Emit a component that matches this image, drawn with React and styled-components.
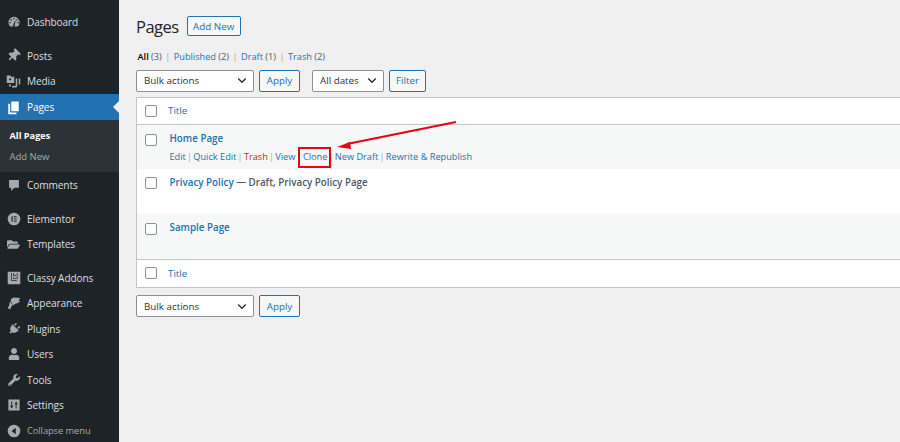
import React from "react";
import styled, { createGlobalStyle } from "styled-components";
import { FaThumbtack, FaFolderOpen, FaPlug, FaUser, FaWrench } from "react-icons/fa";

const GlobalStyle = createGlobalStyle`
  html, body {
    margin: 0;
    padding: 0;
    height: 100%;
    overflow: hidden;
    background: #f0f0f1;
    font-family: "Open Sans", "Noto Sans", sans-serif;
  }
`;

const Dashboard = () => (
  <svg viewBox="0 0 20 20" width="14" height="14" fill="currentColor">
    <path d="M10 2.500a8 8 0 0 0-8 8c0 2.400 1 4.500 2.700 6h10.600A8 8 0 0 0 18 10.500a8 8 0 0 0-8-8zM10 4.300a1.100 1.100 0 1 1 0 2.200 1.100 1.100 0 0 1 0-2.200zM5.800 6a1.100 1.100 0 1 1 0 2.200 1.100 1.100 0 0 1 0-2.200zM14.200 6a1.100 1.100 0 1 1 0 2.200 1.100 1.100 0 0 1 0-2.200zM4.200 10a1.100 1.100 0 1 1 0 2.200 1.100 1.100 0 0 1 0-2.200zM15.800 10a1.100 1.100 0 1 1 0 2.200 1.100 1.100 0 0 1 0-2.200zM8.800 14.500 11.500 8l.8.300-1.500 6.400a1.300 1.300 0 1 1-2-.2z" fillRule="evenodd" />
  </svg>
);

const Media = () => (
  <svg viewBox="0 0 20 20" width="15" height="15" fill="currentColor">
    <path fillRule="evenodd" d="M1 2h5l1 1.500h4V12H1zM5.500 5.500a1.500 1.500 0 1 0 0 3 1.500 1.500 0 0 0 0-3zM13 6h2v9.500a2.500 2.500 0 0 1-2.500 2.500H8v-2l5-.5zM17 6h2v8h-2zM4 14h2.500v2.500H4z" />
  </svg>
);

const PagesIcon = () => (
  <svg viewBox="0 0 20 20" width="15" height="15" fill="currentColor">
    <path d="M7 2h10v13H7z" />
    <path d="M3 5h2.500v11.500H14V19H3z" />
  </svg>
);

const CommentIcon = () => (
  <svg viewBox="0 0 20 20" width="14" height="14" fill="currentColor">
    <path d="M3 3h14v11h-6.500L6 18.500V14H3z" />
  </svg>
);

const Elementor = () => (
  <svg viewBox="0 0 20 20" width="14" height="14" fill="currentColor">
    <path fillRule="evenodd" d="M10 1a9 9 0 1 0 0 18 9 9 0 0 0 0-18zM6.500 6h1.600v8H6.500zM9.800 6h4v1.600h-4zM9.800 9.200h4v1.600h-4zM9.800 12.400h4V14h-4z" />
  </svg>
);

const Classy = () => (
  <svg viewBox="0 0 20 20" width="14" height="14" fill="currentColor">
    <path fillRule="evenodd" d="M1 1h18v18H1zM6 3v11h8v-1H7V3zM9 3v4h4v-1h-3V3zM9 9v2h6V3h-1v7h-4V9z" />
  </svg>
);

const Brush = () => (
  <svg viewBox="0 0 20 20" width="14" height="14" fill="currentColor">
    <path d="M5 5.500 9 2l10 1-2.500 3.500L19 7l-4 3.500-3 .5-3.500 2.500z" />
    <path d="M4.500 7 8 13.500l-2 1.500-1 4-4-1.500 2-3.500.5-3z" />
  </svg>
);

const Settings = () => (
  <svg viewBox="0 0 20 20" width="14" height="14" fill="currentColor">
    <path fillRule="evenodd" d="M2 2h16v16H2zM6 5v6H4.300L6.700 15 9 11H7.400V5zM13 5l-2.300 4h1.600v6h1.400V9h1.700z" />
  </svg>
);

const Collapse = () => (
  <svg viewBox="0 0 20 20" width="14" height="14" fill="currentColor">
    <path fillRule="evenodd" d="M10 1a9 9 0 1 1 0 18 9 9 0 0 1 0-18zM12.500 5.500 6.500 10l6 4.500z" />
  </svg>
);

const Chevron = () => (
  <svg viewBox="0 0 12 8" width="10" height="7" fill="none" stroke="#2c3338" strokeWidth="1.700">
    <path d="M1.500 1.500 6 6l4.500-4.500" />
  </svg>
);

const Page = styled.div`
  display: flex;
  width: 900px;
  height: 442px;
  overflow: hidden;
  background: #f0f0f1;
`;

const Sidebar = styled.nav`
  flex: none;
  width: 119px;
  height: 442px;
  padding-top: 9.500px;
  box-sizing: border-box;
  background: #1d2327;
`;

const MenuItem = styled.div`
  position: relative;
  display: flex;
  align-items: center;
  height: ${(p) => (p.$active ? 26 : 25.500)}px;
  margin-top: ${(p) => p.$gap || 0}px;
  background: ${(p) => (p.$active ? "#2271b1" : "transparent")};
  color: ${(p) => (p.$muted ? "#a7aaad" : p.$active ? "#fff" : "#dcdee0")};
  font-size: ${(p) => (p.$muted ? 9.400 : 10.100)}px;
  letter-spacing: -0.100px;
`;

const MenuIcon = styled.span`
  flex: none;
  display: flex;
  justify-content: center;
  align-items: center;
  width: 27px;
  color: ${(p) => (p.$active ? "#fff" : "#a7aaad")};
`;

const ActiveNotch = styled.span`
  position: absolute;
  right: 0;
  top: 50%;
  margin-top: -6px;
  border: 6px solid transparent;
  border-right-color: #f0f0f1;
  border-left: 0;
`;

const Submenu = styled.div`
  display: flex;
  flex-direction: column;
  height: 52px;
  padding: 5px 0 0 9.500px;
  box-sizing: border-box;
  background: #2c3338;
`;

const SubItem = styled.div`
  height: 21px;
  line-height: 21px;
  font-size: ${(p) => (p.$current ? 9.200 : 9.500)}px;
  font-weight: ${(p) => (p.$current ? 700 : 400)};
  color: ${(p) => (p.$current ? "#fff" : "#a4a8ab")};
`;

const Main = styled.main`
  position: relative;
  flex: 1;
  min-width: 0;
  padding: 16px 0 0 17px;
`;

const Heading = styled.div`
  display: flex;
  align-items: center;
  gap: 8px;
  height: 20px;
`;

const Title = styled.h1`
  margin: 0;
  font-size: 16.500px;
  font-weight: 400;
  letter-spacing: -0.500px;
  color: #1d2327;
`;

const OutlineButton = styled.button`
  display: inline-flex;
  align-items: center;
  justify-content: center;
  box-sizing: border-box;
  width: ${(p) => p.$w}px;
  height: ${(p) => p.$h || 22}px;
  padding: 0;
  margin-left: ${(p) => p.$gap || 0}px;
  border: 1px solid #2271b1;
  border-radius: 2px;
  background: #f6f7f7;
  color: #2271b1;
  font: 400 9.800px "Open Sans", sans-serif;
`;

const ViewLinks = styled.div`
  display: flex;
  align-items: center;
  height: 13px;
  margin-top: 14px;
  padding-left: 1.500px;
  font-size: 9.200px;
  color: #50575e;
  white-space: pre;
`;

const ViewCurrent = styled.span`
  color: #000;
  font-weight: 600;
`;

const Link = styled.span`
  color: ${(p) => (p.$danger ? "#b32d2e" : "#2271b1")};
`;

const Divider = styled.span`
  flex: none;
  width: ${(p) => p.$w}px;
  text-align: center;
  color: #a7aaad;
`;

const Toolbar = styled.div`
  display: flex;
  align-items: center;
  height: 22px;
  margin-top: ${(p) => p.$top}px;
`;

const SelectBox = styled.div`
  display: flex;
  align-items: center;
  justify-content: space-between;
  box-sizing: border-box;
  width: ${(p) => p.$w}px;
  height: 22px;
  margin-left: ${(p) => p.$gap || 0}px;
  padding: 0 6px 0 7px;
  border: 1px solid #8c8f94;
  border-radius: 2px;
  background: #fff;
  color: #2c3338;
  font-size: 9.800px;
`;

const Table = styled.div`
  width: 800px;
  margin-top: 5px;
  border: 1px solid #c3c4c7;
  background: #fff;
`;

const HeadRow = styled.div`
  display: flex;
  align-items: center;
  height: ${(p) => p.$h}px;
  padding-left: 8px;
  border-${(p) => p.$edge}: 1px solid #c3c4c7;
  font-size: 9.800px;
`;

const Row = styled.div`
  display: flex;
  height: ${(p) => p.$h}px;
  padding: 7px 0 0 8px;
  box-sizing: border-box;
  background: ${(p) => (p.$alt ? "#f6f7f7" : "#fff")};
`;

const Check = styled.span`
  flex: none;
  box-sizing: border-box;
  width: 12px;
  height: 12px;
  margin-right: ${(p) => p.$gap}px;
  margin-top: ${(p) => p.$top || 0}px;
  border: 1px solid #8c8f94;
  border-radius: 2px;
  background: #fff;
`;

const RowBody = styled.div`
  display: flex;
  flex-direction: column;
`;

const RowTitle = styled.div`
  height: 13px;
  line-height: 13px;
  font-size: 9.800px;
  font-weight: 600;
  color: #2271b1;
  white-space: pre;
`;

const DraftNote = styled.span`
  color: #50575e;
  font-weight: 600;
`;

const RowActions = styled.div`
  display: flex;
  align-items: center;
  height: 13px;
  margin-top: 5px;
  font-size: 9.200px;
  white-space: pre;
`;

const CloneLink = styled.span`
  position: relative;
  color: #2271b1;
`;

const CloneBox = styled.span`
  position: absolute;
  left: -4.500px;
  top: -2.500px;
  width: 33px;
  height: 21px;
  box-sizing: border-box;
  border: 2px solid #e30613;
`;

const Annotation = styled.svg`
  position: absolute;
  left: 200px;
  top: 110px;
`;

const top = [
  { label: "Dashboard", icon: <Dashboard /> },
  { label: "Posts", icon: <FaThumbtack size={13} style={{ transform: "rotate(45deg)" }} />, gap: 8 },
  { label: "Media", icon: <Media /> },
];

const lower = [
  { label: "Comments", icon: <CommentIcon /> },
  { label: "Elementor", icon: <Elementor />, gap: 8.500 },
  { label: "Templates", icon: <FaFolderOpen size={13} /> },
  { label: "Classy Addons", icon: <Classy />, gap: 8 },
  { label: "Appearance", icon: <Brush /> },
  { label: "Plugins", icon: <FaPlug size={12} style={{ transform: "rotate(45deg)" }} /> },
  { label: "Users", icon: <FaUser size={12} /> },
  { label: "Tools", icon: <FaWrench size={12} /> },
  { label: "Settings", icon: <Settings /> },
  { label: "Collapse menu", icon: <Collapse />, muted: true },
];

const renderItem = (item) => (
  <MenuItem key={item.label} $gap={item.gap} $muted={item.muted}>
    <MenuIcon>{item.icon}</MenuIcon>
    {item.label}
  </MenuItem>
);

const BulkBar = ({ top: offset, children }) => (
  <Toolbar $top={offset}>
    <SelectBox $w={118}>
      Bulk actions <Chevron />
    </SelectBox>
    <OutlineButton $w={41} $gap={5}>Apply</OutlineButton>
    {children}
  </Toolbar>
);

export default function App() {
  return (
    <>
      <GlobalStyle />
      <Page>
        <Sidebar>
          {top.map(renderItem)}
          <MenuItem $active>
            <MenuIcon $active><PagesIcon /></MenuIcon>
            Pages
            <ActiveNotch />
          </MenuItem>
          <Submenu>
            <SubItem $current>All Pages</SubItem>
            <SubItem>Add New</SubItem>
          </Submenu>
          {lower.map(renderItem)}
        </Sidebar>
        <Main>
          <Heading>
            <Title>Pages</Title>
            <OutlineButton $w={54} $h={20}>Add New</OutlineButton>
          </Heading>
          <ViewLinks>
            <ViewCurrent>All</ViewCurrent> (3)<Divider $w={12}>|</Divider>
            <Link>Published</Link> (2)<Divider $w={12}>|</Divider>
            <Link>Draft</Link> (1)<Divider $w={12}>|</Divider>
            <Link>Trash</Link> (2)
          </ViewLinks>
          <BulkBar top={6.500}>
            <SelectBox $w={72} $gap={12}>
              All dates <Chevron />
            </SelectBox>
            <OutlineButton $w={37} $gap={5}>Filter</OutlineButton>
          </BulkBar>
          <Table>
            <HeadRow $h={26} $edge="bottom">
              <Check $gap={11} />
              <Link>Title</Link>
            </HeadRow>
            <Row $alt $h={44.500}>
              <Check $gap={12.500} $top={2} />
              <RowBody>
                <RowTitle>Home Page</RowTitle>
                <RowActions>
                  <Link>Edit</Link><Divider $w={7.500}>|</Divider>
                  <Link>Quick Edit</Link><Divider $w={7.500}>|</Divider>
                  <Link $danger>Trash</Link><Divider $w={7.500}>|</Divider>
                  <Link>View</Link><Divider $w={7.500}>|</Divider>
                  <CloneLink>Clone<CloneBox /></CloneLink><Divider $w={7.500}>|</Divider>
                  <Link>New Draft</Link><Divider $w={7.500}>|</Divider>
                  <Link>Rewrite &amp; Republish</Link>
                </RowActions>
              </RowBody>
            </Row>
            <Row $h={44.500}>
              <Check $gap={12.500} $top={1} />
              <RowTitle>Privacy Policy<DraftNote> — Draft, Privacy Policy Page</DraftNote></RowTitle>
            </Row>
            <Row $alt $h={45}>
              <Check $gap={12.500} $top={2} />
              <RowTitle>Sample Page</RowTitle>
            </Row>
            <HeadRow $h={27} $edge="top">
              <Check $gap={11} />
              <Link>Title</Link>
            </HeadRow>
          </Table>
          <BulkBar top={7.500} />
          <Annotation width="270" height="45" viewBox="0 0 270 45">
            <path d="M137 12 28 34" stroke="#e30613" strokeWidth="2.200" />
            <path d="M18 37 31 32 32 39z" fill="#e30613" />
          </Annotation>
        </Main>
      </Page>
    </>
  );
}
